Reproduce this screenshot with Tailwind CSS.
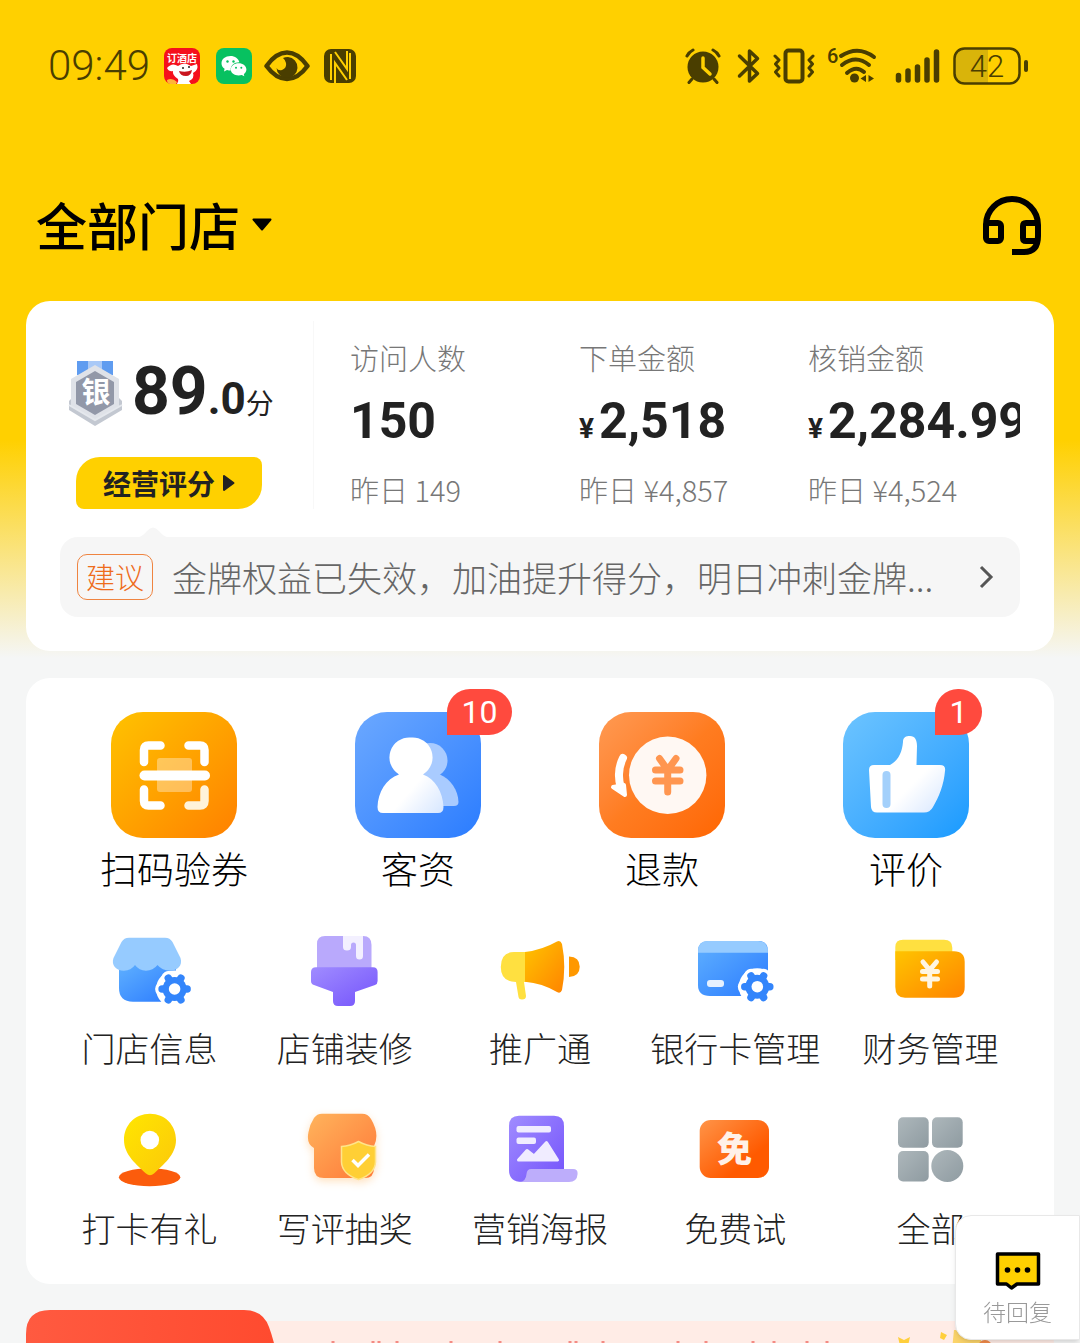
<!DOCTYPE html>
<html lang="zh-CN">
<head>
    <meta charset="UTF-8">
    <meta name="viewport" content="width=device-width, initial-scale=1.0">
    <title>商家首页</title>
    <script src="https://cdn.jsdelivr.net/npm/@tailwindcss/browser@4"></script>
    <style>
        body { font-family: 'Noto Sans CJK SC', sans-serif; font-weight: 300; }
    </style>
</head>
<body class="bg-[#f5f6f6] text-[#222]">

    <!-- 公用渐变和图形 -->
    <svg class="absolute w-0 h-0" aria-hidden="true">
        <defs>
            <linearGradient id="g-blue" x1="0" y1="0" x2="1" y2="1"><stop offset="0" stop-color="#5fb0ff"/><stop offset="1" stop-color="#2b7bff"/></linearGradient>
            <linearGradient id="g-purple" x1="0" y1="0" x2="1" y2="1"><stop offset="0" stop-color="#a08cff"/><stop offset="1" stop-color="#7453fb"/></linearGradient>
            <linearGradient id="g-amber" x1="0" y1="0" x2="1" y2="1"><stop offset="0" stop-color="#ffc400"/><stop offset="1" stop-color="#ff8400"/></linearGradient>
            <linearGradient id="g-yellow" x1="0" y1="0" x2="1" y2="1"><stop offset="0" stop-color="#ffe600"/><stop offset="1" stop-color="#fcc80a"/></linearGradient>
            <linearGradient id="g-orange" x1="0" y1="0" x2="1" y2="1"><stop offset="0" stop-color="#ff9448"/><stop offset=".7" stop-color="#ff5a00"/></linearGradient>
            <linearGradient id="g-peach" x1="0" y1="0" x2="1" y2="1"><stop offset="0" stop-color="#ffb45c"/><stop offset="1" stop-color="#ff7838"/></linearGradient>
            <linearGradient id="g-grey" x1="0" y1="0" x2="1" y2="1"><stop offset="0" stop-color="#adb7bb"/><stop offset="1" stop-color="#8f9ba1"/></linearGradient>
            <linearGradient id="g-white" x1="0" y1="0" x2="1" y2="1"><stop offset=".6" stop-color="#fff"/><stop offset="1" stop-color="#d6e6ff"/></linearGradient>
            <g id="gear">
                <g fill="#fff" stroke="#fff" stroke-width="15" stroke-linejoin="round">
                    <circle r="11"/>
                    <path d="M-12 0H12M-6 -10.400L6 10.400M6 -10.400L-6 10.400" stroke-linecap="round"/>
                </g>
                <circle r="12" fill="#3385fb"/>
                <path d="M-12.500 0H12.500M-6.300 -10.800L6.300 10.800M6.300 -10.800L-6.300 10.800" stroke="#3385fb" stroke-width="7.500" stroke-linecap="round"/>
                <circle r="5.800" fill="#fff"/>
            </g>
        </defs>
    </svg>

    <div class="h-screen overflow-hidden bg-[linear-gradient(to_bottom,#ffd000_0px,#ffd000_440px,#f5f6f6_658px)]">

        <!-- 状态栏 -->
        <div class="h-[132px] pl-12 pr-[51px] flex items-center justify-between text-[#4a3e00]">
            <div class="flex items-center">
                <span class="font-[Roboto] font-light text-[42px] leading-none">09:49</span>
                <svg class="ml-[14px] w-9 h-9" viewBox="0 0 36 36">
                    <rect width="36" height="36" rx="8" fill="#f5101c"/>
                    <text x="18" y="14" font-size="10" font-weight="700" fill="#fff" text-anchor="middle">订酒店</text>
                    <path d="M3 20Q8 14 14 18Q20 13 27 18L33 16Q35 22 29 25Q31 30 25 33L27 36H13Q15 33 14 31Q8 27 9 23Q5 24 3 20Z" fill="#fff"/>
                    <path d="M15 23Q22 25 28 22Q27 28 22 28Q16 28 15 23Z" fill="#c9151e"/>
                    <circle cx="19" cy="20" r="1" fill="#222"/><circle cx="25" cy="19" r="1" fill="#222"/>
                    <path d="M3 32Q8 29 13 34L12 36H6Q3 35 3 32Z" fill="#ffb43a"/>
                </svg>
                <svg class="ml-4 w-9 h-9" viewBox="0 0 36 36">
                    <rect width="36" height="36" rx="8" fill="#07c160"/>
                    <path d="M14.500 8C9.500 8 5.500 11 5.500 15.300C5.500 17.600 6.700 19.500 8.600 20.800L8 23.600L11 22C12.300 22.500 13.500 22.600 14.800 22.600C14 17.500 18.500 14.200 23.400 14.300C22.600 10.500 18.900 8 14.500 8Z" fill="#fff"/>
                    <path d="M22.600 15.300C26.900 15.300 30.400 18 30.400 21.500C30.400 23.400 29.400 25 27.800 26.100L28.300 28.300L25.800 27C20.500 28.600 14.800 26 14.800 21.500C14.800 18 18.300 15.300 22.600 15.300Z" fill="#fff"/>
                    <g fill="#07c160"><circle cx="11.500" cy="13.500" r="1.200"/><circle cx="17.500" cy="13.500" r="1.200"/><circle cx="20" cy="19.700" r="1"/><circle cx="25.300" cy="19.700" r="1"/></g>
                </svg>
                <svg class="ml-3 w-[46px] h-8" viewBox="0 0 46 32" fill="none" stroke="currentColor">
                    <path d="M2.500 16Q12 2.500 23 2.500T43.500 16Q34 29 23 29T2.500 16Z" stroke-width="4.500" stroke-linejoin="round"/>
                    <path d="M24 7A10.500 10.500 0 1 1 12.500 18Q14 21 18 20Q23 18 22 13Q21.500 10 19 8Q21 7 24 7Z" fill="currentColor" stroke="none"/>
                </svg>
                <svg class="ml-[14px] w-8 h-[34px]" viewBox="0 0 32 34">
                    <rect width="32" height="34" rx="7" fill="currentColor"/>
                    <path d="M7 31V5M11 34V14L23 31M23 2V20L11 3M26 4V30" fill="none" stroke="#ffd000" stroke-width="2"/>
                </svg>
            </div>
            <div class="flex items-center">
                <svg class="w-9 h-9" viewBox="0 0 36 36" fill="none" stroke="currentColor" stroke-linecap="round">
                    <circle cx="18" cy="19" r="15.500" fill="currentColor" stroke="none"/>
                    <path d="M2 8Q4 4 8 2M34 8Q32 4 28 2M7 31L4 34.500M29 31L32 34.500" stroke-width="3"/>
                    <path d="M18 10V19.500L25 26" stroke="#ffd000" stroke-width="3.500"/>
                </svg>
                <svg class="ml-4 w-6 h-9" viewBox="0 0 24 36" fill="none" stroke="currentColor" stroke-width="3.500" stroke-linejoin="round" stroke-linecap="round">
                    <path d="M2.500 8L20.500 25.500L12.500 33V3L20.500 10.500L2.500 28"/>
                </svg>
                <svg class="ml-3 w-[42px] h-9" viewBox="0 0 42 36" fill="none" stroke="currentColor" stroke-linejoin="round" stroke-linecap="round">
                    <rect x="12.500" y="2.500" width="17" height="31" rx="3" stroke-width="4"/>
                    <path d="M2 8L6 12L2.500 16L6 20L2.500 24L6 28M40 8L36 12L39.500 16L36 20L39.500 24L36 28" stroke-width="3"/>
                </svg>
                <svg class="ml-3 w-[50px] h-9 overflow-visible" viewBox="0 0 50 36" fill="none" stroke="currentColor" stroke-linecap="round">
                    <text x="0" y="15" font-family="Roboto" font-size="20" font-weight="500" fill="currentColor" stroke="none">6</text>
                    <path d="M14 8Q31-3 47 9M15 17Q29 6 42 17M20 25Q29 17 37 24" stroke-width="4"/>
                    <circle cx="27.500" cy="30" r="4.500" fill="currentColor" stroke="none"/>
                    <path d="M39 27V34L33.500 30.500ZM41.500 27V34L47 30.500Z" fill="currentColor" stroke="none"/>
                </svg>
                <svg class="ml-[18px] w-[46px] h-9" viewBox="0 0 46 36" stroke="currentColor" stroke-width="5.500" stroke-linecap="round">
                    <path d="M3.500 27.500V32M13 23V32M22.500 19V32M32 12V32M41.500 4V32"/>
                </svg>
                <svg class="ml-3 w-[76px] h-[38px]" viewBox="0 0 76 38" fill="none">
                    <path d="M12 2H35V36H12Q2 36 2 26V12Q2 2 12 2Z" fill="#d9b40a"/>
                    <rect x="1.500" y="1.500" width="65" height="35" rx="10" stroke="currentColor" stroke-width="2.500"/>
                    <path d="M73 15V23" stroke="currentColor" stroke-width="4" stroke-linecap="round"/>
                    <text x="34" y="30" font-family="Roboto" font-size="31" font-weight="300" fill="currentColor" text-anchor="middle">42</text>
                </svg>
            </div>
        </div>

        <!-- 门店选择 -->
        <header class="h-[169px] pt-4 pl-9 pr-[38px] flex items-center justify-between text-black">
            <button type="button" class="flex items-center gap-3 text-[51px] leading-none font-medium">
                全部门店
                <svg class="w-5 h-4" viewBox="0 0 20 16"><path d="M1.500 2.500H18.500L10 12.500Z" fill="currentColor" stroke="currentColor" stroke-width="2" stroke-linejoin="round"/></svg>
            </button>
            <button type="button" aria-label="客服">
                <svg class="w-[60px] h-[62px]" viewBox="0 0 60 62" fill="none" stroke="currentColor" stroke-width="6">
                    <path d="M4 44V31A26 26 0 0 1 56 31V42Q56 58 42 58H30"/>
                    <rect x="4" y="29" width="15" height="18" rx="3"/>
                    <path d="M56 29H44Q41 29 41 32V44Q41 47 44 47H56"/>
                </svg>
            </button>
        </header>

        <main class="px-[26px]">
            <!-- 经营数据 -->
            <section class="bg-white rounded-3xl px-[34px] pt-5 pb-[34px]">
                <div class="flex">
                    <div class="w-[254px] shrink-0 pt-9 pl-2 border-r border-[#f8f8f8]">
                        <div class="flex items-end">
                            <svg class="w-14 h-[72px] shrink-0" viewBox="0 0 56 72">
                                <path d="M9 4H45V18H9Z" fill="#5f9cf0"/><path d="M20 4H34V18H20Z" fill="#a9c9f7"/>
                                <path d="M27 9L50 22V40L54 44V53L27 69L1 53V44L5 40V22Z" fill="#c3c8d1"/>
                                <path d="M27 8L51 22V49L27 63L3 49V22Z" fill="#dfe2e8"/>
                                <path d="M27 14L46 25V47L27 58L8 47V25Z" fill="#9298a8"/>
                                <path d="M1 48L27 63L54 48" fill="none" stroke="#e5e8ed" stroke-width="2"/>
                                <text x="28" y="46" font-size="29" font-weight="700" fill="#fff" text-anchor="middle">银</text>
                            </svg>
                            <p class="pl-2 pb-1 flex items-baseline font-[Roboto] font-bold leading-none whitespace-nowrap"><span class="text-[66px]">89</span><span class="text-[44px]">.0</span><span class="font-['Noto_Sans_CJK_SC'] font-normal text-[28px] leading-none">分</span></p>
                        </div>
                        <button type="button" class="mt-7 ml-2 h-[52px] w-[186px] flex items-center justify-center gap-2 bg-[#ffd000] rounded-tl-3xl rounded-br-3xl rounded-tr-lg rounded-bl-lg text-[28px] font-bold">
                            经营评分
                            <svg class="w-3 h-5" viewBox="0 0 12 20"><path d="M1 3L10.500 10L1 17Z" fill="currentColor" stroke="currentColor" stroke-width="2" stroke-linejoin="round"/></svg>
                        </button>
                    </div>
                    <dl class="flex-1 min-w-0 pl-9 pt-4 grid grid-cols-[229px_229px_1fr] text-[#777] text-[29px] leading-10">
                        <div>
                            <dt>访问人数</dt>
                            <dd class="mt-4 h-14 font-[Roboto] font-bold text-[50px] leading-14 text-[#222]">150</dd>
                            <dd class="mt-5">昨日 149</dd>
                        </div>
                        <div>
                            <dt>下单金额</dt>
                            <dd class="mt-4 h-14 font-[Roboto] font-bold text-[50px] leading-14 text-[#222]"><span class="text-[28px] leading-none">¥</span>&#8202;2,518</dd>
                            <dd class="mt-5">昨日 ¥4,857</dd>
                        </div>
                        <div class="min-w-0">
                            <dt>核销金额</dt>
                            <dd class="mt-4 h-14 font-[Roboto] font-bold text-[50px] leading-14 text-[#222] whitespace-nowrap overflow-hidden"><span class="text-[28px] leading-none">¥</span>&#8202;2,284.99</dd>
                            <dd class="mt-5">昨日 ¥4,524</dd>
                        </div>
                    </dl>
                </div>
                <a href="#" class="relative mt-7 h-20 pl-[17px] pr-6 flex items-center rounded-[18px] bg-[#f6f6f6]">
                    <svg class="absolute -top-[10px] left-[79px] w-7 h-[10px]" viewBox="0 0 28 10"><path d="M0 10Q4 9 8 4Q14-3 20 4Q24 9 28 10Z" fill="#f6f6f6"/></svg>
                    <span class="shrink-0 h-[46px] px-2 flex items-center border border-[#ef8440] rounded-[10px] text-[29px] text-[#ee6c1c]">建议</span>
                    <span class="ml-[19px] flex-1 min-w-0 whitespace-nowrap overflow-hidden text-[35px] text-[#666]">金牌权益已失效，加油提升得分，明日冲刺金牌...</span>
                    <svg class="w-5 h-6 shrink-0" viewBox="0 0 20 24" fill="none" stroke="#555" stroke-width="3"><path d="M5 2L15 12L5 22"/></svg>
                </a>
            </section>

            <!-- 功能入口 -->
            <section class="mt-[27px] bg-white rounded-3xl px-[26px] pt-[34px] pb-9 text-center">
                <nav class="grid grid-cols-4 text-[37px] leading-12 text-black">
                    <a href="#" class="flex flex-col items-center gap-[6px]">
                        <svg class="w-[126px] h-[126px] rounded-[32px] bg-linear-to-br from-[#ffc200] to-[#ff8000]" viewBox="0 0 126 126" fill="none" stroke="#fff" stroke-width="8.500" stroke-linecap="round">
                            <rect x="46" y="46" width="35" height="34" rx="3" fill="#fff" fill-opacity=".35" stroke="none"/>
                            <path d="M33 50V38Q33 33.500 37.500 33.500H49.500M77.500 33.500H89Q93.500 33.500 93.500 38V50M33 77.500V89Q33 93.500 37.500 93.500H49.500"/>
                            <path d="M77.500 93.500H89Q93.500 93.500 93.500 89V77.500" stroke="#fff3d9"/>
                            <path d="M33.500 63.500H94" stroke-width="10"/>
                        </svg>
                        扫码验券
                    </a>
                    <a href="#" class="flex flex-col items-center gap-[6px]">
                        <span class="relative">
                            <svg class="w-[126px] h-[126px] rounded-[32px] bg-linear-to-br from-[#6ba8ff] to-[#2a7cff]" viewBox="0 0 126 126">
                                <g fill="#a9cbff"><circle cx="75" cy="48.500" r="17.500"/><path d="M70 62H84C96 67 103 78 103.500 90Q103.500 94 99 94H70Z"/></g>
                                <path d="M56 25.500A20 20 0 0 1 68 62.500C80 67 88 80 88.500 95Q88.500 101 83 101H28Q22.500 101 22.500 95C23 80 31 67 44 62.500A20 20 0 0 1 56 25.500Z" fill="url(#g-white)"/>
                            </svg>
                            <span class="absolute -top-[23px] left-[92px] w-[65px] h-[46px] bg-[#ff4a3e] rounded-full rounded-bl-none font-[Roboto] text-white text-[32px] leading-[46px] font-normal">10</span>
                        </span>
                        客资
                    </a>
                    <a href="#" class="flex flex-col items-center gap-[6px]">
                        <svg class="w-[126px] h-[126px] rounded-[32px] bg-linear-to-br from-[#ff9a52] via-[#ff7c20] to-[#ff6600]" viewBox="0 0 126 126" fill="none" stroke-linecap="round" stroke-linejoin="round">
                            <circle cx="68.700" cy="63.300" r="38.700" fill="#fff8f3"/>
                            <path d="M60.500 46.500L68.700 58L77 46.500M56.500 58H81M56.500 69H81M68.700 58V80" stroke="#ff9650" stroke-width="7"/>
                            <path d="M24 46Q17 60 22 76" stroke="#fff" stroke-width="8"/>
                            <path d="M14 75L25 73L26 83Z" fill="#fff" stroke="#fff" stroke-width="4"/>
                        </svg>
                        退款
                    </a>
                    <a href="#" class="flex flex-col items-center gap-[6px]">
                        <span class="relative">
                            <svg class="w-[126px] h-[126px] rounded-[32px] bg-linear-to-br from-[#6cc4ff] to-[#149aff]" viewBox="0 0 126 126">
                                <path d="M31 53H47C56 48 59 40 60 30C60 25 63 24 67 24C72 24 74 28 74 34L73.500 53H97Q103 53 102 59C101 72 96 85 90 95Q87 100.600 81 100.600H34Q28.500 100.600 28 95L26 58Q26 53 31 53Z" fill="url(#g-white)"/>
                                <rect x="39.500" y="59" width="8" height="37" rx="4" fill="#a3d0fb"/>
                            </svg>
                            <span class="absolute -top-[23px] left-[92px] w-[47px] h-[46px] bg-[#ff4a3e] rounded-full rounded-bl-none font-[Roboto] text-white text-[32px] leading-[46px] font-normal">1</span>
                        </span>
                        评价
                    </a>
                </nav>

                <nav class="mt-[38px] grid grid-cols-5 gap-y-[42px] text-[34px] leading-10 whitespace-nowrap">
                    <a href="#" class="flex flex-col items-center gap-[18px]">
                        <svg class="w-20 h-20 overflow-visible" viewBox="0 0 80 80">
                            <path d="M9 34H66V71.700H23Q9 71.700 9 58Z" fill="url(#g-blue)"/>
                            <use href="#gear" x="64.600" y="59"/>
                            <path d="M19 7.700H55Q60 7.700 62.500 12L70.500 28C73 36 67 40.700 60 40.700Q52 40.700 47.500 35Q43 40.700 36 40.700T25 35Q21 40.700 14 40.700C6 40.700 1 35 3.500 28L11.500 12Q14 7.700 19 7.700Z" fill="#96cbff"/>
                        </svg>
                        门店信息
                    </a>
                    <a href="#" class="flex flex-col items-center gap-[18px]">
                        <svg class="w-20 h-20" viewBox="0 0 80 80">
                            <path d="M20 6H58Q66.500 6 66.500 15V40H12V14Q12 6 20 6Z" fill="#b9a9fc"/>
                            <path d="M38 6H58V26Q58 29.500 54.500 29.500T51 26V15Q51 12.500 48.500 12.500T46 15V17Q46 20.500 42 20.500T38 17Z" fill="#f3f0ff"/>
                            <path d="M11 37.300H68Q72.600 37.300 72.600 42V51Q72.600 54 70 55L50 62V71Q50 76 45 76H33Q28 76 28 71V62L9 55Q6 54 6 51V42Q6 37.300 11 37.300Z" fill="url(#g-purple)"/>
                        </svg>
                        店铺装修
                    </a>
                    <a href="#" class="flex flex-col items-center gap-[18px]">
                        <svg class="w-20 h-20" viewBox="0 0 80 80">
                            <path d="M14 22H26V52H24L26 66Q26 69.500 22 69.500Q19 69.500 18.500 67L16 52Q.8 52 .8 37T14 22Z" fill="#ffe040"/>
                            <path d="M25 22Q42 20 57 11.500Q60.500 10 62 14Q66.500 37 62 60Q60.500 64 57 62Q42 53 25 51.700Z" fill="url(#g-amber)"/>
                            <path d="M69 26.500Q79.700 27 79.700 36.700T69 47Z" fill="#ff9800"/>
                        </svg>
                        推广通
                    </a>
                    <a href="#" class="flex flex-col items-center gap-[18px]">
                        <svg class="w-20 h-20 overflow-visible" viewBox="0 0 80 80">
                            <path d="M13 11H63Q73 11 73 21V66H15Q3 66 3 55V21Q3 11 13 11Z" fill="url(#g-blue)"/>
                            <path d="M13 11H63Q73 11 73 22.700H3Q3 11 13 11Z" fill="#96cbff"/>
                            <rect x="12" y="50" width="17" height="7" rx="3" fill="#e6f1ff"/>
                            <use href="#gear" x="62.300" y="56.700"/>
                        </svg>
                        银行卡管理
                    </a>
                    <a href="#" class="flex flex-col items-center gap-[18px]">
                        <svg class="w-20 h-20" viewBox="0 0 80 80">
                            <path d="M13 9.700H54Q62.300 9.700 62.300 18V30H5.300V17Q5.300 9.700 13 9.700Z" fill="#ffe040"/>
                            <path d="M5.300 21.300H64Q74.700 21.300 74.700 32V57Q74.700 67.700 64 67.700H15Q5.300 67.700 5.300 57Z" fill="url(#g-amber)"/>
                            <path d="M33 32L39.700 40L46.500 32M32.500 41.500H47.500M32.500 49H47.500M39.700 41V56" fill="none" stroke="#fff5e2" stroke-width="5" stroke-linecap="round"/>
                        </svg>
                        财务管理
                    </a>
                    <a href="#" class="flex flex-col items-center gap-[18px]">
                        <svg class="w-20 h-20" viewBox="0 0 80 80">
                            <ellipse cx="39.600" cy="67.300" rx="30.700" ry="9" fill="#fb5c0c"/>
                            <path d="M40 3.700C55 3.700 66 15 66 30C66 45 53 55 44 63.500Q40 67 36 63.500C27 55 14 45 14 30C14 15 25 3.700 40 3.700Z" fill="url(#g-yellow)"/>
                            <circle cx="39.800" cy="30" r="9.300" fill="#fff"/>
                        </svg>
                        打卡有礼
                    </a>
                    <a href="#" class="flex flex-col items-center gap-[18px]">
                        <svg class="w-20 h-20 overflow-visible drop-shadow-[0_3px_4px_#ffb45c66]" viewBox="0 0 80 80">
                            <path d="M17 3.700H57Q63 3.700 66 9Q75 24 69 36V58Q69 68 60 68H19Q9 68 9 58V38Q1 34 3.500 22Q5 14 9 8Q12 3.700 17 3.700Z" fill="url(#g-peach)"/>
                            <path d="M53.500 31.500Q62 36 70.500 36.500V52Q70 64 53.500 69.500Q37 64 36.500 52V36.500Q45 36 53.500 31.500Z" fill="#ffcf35" stroke="#ffe48a" stroke-width="1.500"/>
                            <path d="M47.500 50L53 55.500L64 44.500" fill="none" stroke="#fff" stroke-width="3.500"/>
                        </svg>
                        写评抽奖
                    </a>
                    <a href="#" class="flex flex-col items-center gap-[18px]">
                        <svg class="w-20 h-20" viewBox="0 0 80 80">
                            <path d="M19 5.700H54Q64 5.700 64 16V62L30 72H22Q9 72 9 60V16Q9 5.700 19 5.700Z" fill="url(#g-purple)"/>
                            <path d="M31 59H73Q78 59 77.600 64Q77 72 69 72H20Q26 71 26.500 64Q27 59 31 59Z" fill="#bdadfb"/>
                            <g fill="#f0ecff"><rect x="16.500" y="16" width="34.500" height="6.500" rx="2"/><rect x="16.500" y="27.500" width="19.500" height="6.500" rx="2"/></g>
                            <path d="M18.500 50L27 40.500L34 46L46.500 32.500L57.500 50Z" fill="#f0ecff" stroke="#f0ecff" stroke-width="3" stroke-linejoin="round"/>
                        </svg>
                        营销海报
                    </a>
                    <a href="#" class="flex flex-col items-center gap-[18px]">
                        <svg class="w-20 h-20" viewBox="0 0 80 80">
                            <rect x="4.700" y="10" width="69.300" height="58" rx="11" fill="url(#g-orange)"/>
                            <text x="39.500" y="52" font-size="35" font-weight="900" fill="#fff1e8" text-anchor="middle">免</text>
                        </svg>
                        免费试
                    </a>
                    <a href="#" class="flex flex-col items-center gap-[18px]">
                        <svg class="w-20 h-20" viewBox="0 0 80 80" fill="url(#g-grey)">
                            <rect x="8" y="7.300" width="30.700" height="30.400" rx="5"/><rect x="42" y="7.300" width="30.700" height="30.400" rx="5"/>
                            <rect x="8" y="41" width="30.700" height="30.400" rx="5"/><circle cx="57.300" cy="56" r="16"/>
                        </svg>
                        全部
                    </a>
                </nav>
            </section>

            <!-- 活动横幅 -->
            <svg class="mt-[26px] w-full h-[120px]" viewBox="0 0 1028 120" preserveAspectRatio="xMinYMin slice" aria-hidden="true">
                <defs><linearGradient id="g-banner"><stop offset="0" stop-color="#ff5a40"/><stop offset="1" stop-color="#ff4a2e"/></linearGradient></defs>
                <path d="M200 11H1004Q1028 11 1028 35V120H200Z" fill="#ffece6"/>
                <path d="M24 0H218Q237 0 243 17Q254 46 262 120H0V24Q0 0 24 0Z" fill="url(#g-banner)"/>
                <path d="M307 31V40M347 31V40M353 31V40M371 31V40M425 31V40M474 31V40M544 31V40M550 31V40M577 31V40M652 31V40M680 31V40M727 31V40M748 31V40M781 31V40M801 31V40" stroke="#f48b84" stroke-width="3"/>
                <path d="M872 27L878 30L884 27L881 40H875ZM915 22L921 25L918 30L914 28Z" fill="#ffcf3c"/>
                <path d="M928 20H955V60H924Z" fill="#fbd46a"/>
                <circle cx="959" cy="37" r="7" fill="#f28a4a"/>
            </svg>
        </main>
    </div>

    <!-- 悬浮消息 -->
    <a href="#" class="fixed right-0 bottom-[3px] w-[125px] h-[125px] flex flex-col items-center justify-end pb-[14px] gap-[6px] bg-white rounded-l-2xl border border-[#e8e8e8] shadow-md text-[23px] leading-7 text-[#999]">
        <svg class="w-[46px] h-10" viewBox="0 0 46 40">
            <path d="M2.500 3H43.500V33H22L16.500 37L11.500 33H2.500Z" fill="#ffd000" stroke="#000" stroke-width="3.500" stroke-linejoin="round"/>
            <circle cx="12.500" cy="19" r="2.800"/><circle cx="22.500" cy="19" r="2.800"/><circle cx="32.500" cy="19" r="2.800"/>
        </svg>
        待回复
    </a>

</body>
</html>
